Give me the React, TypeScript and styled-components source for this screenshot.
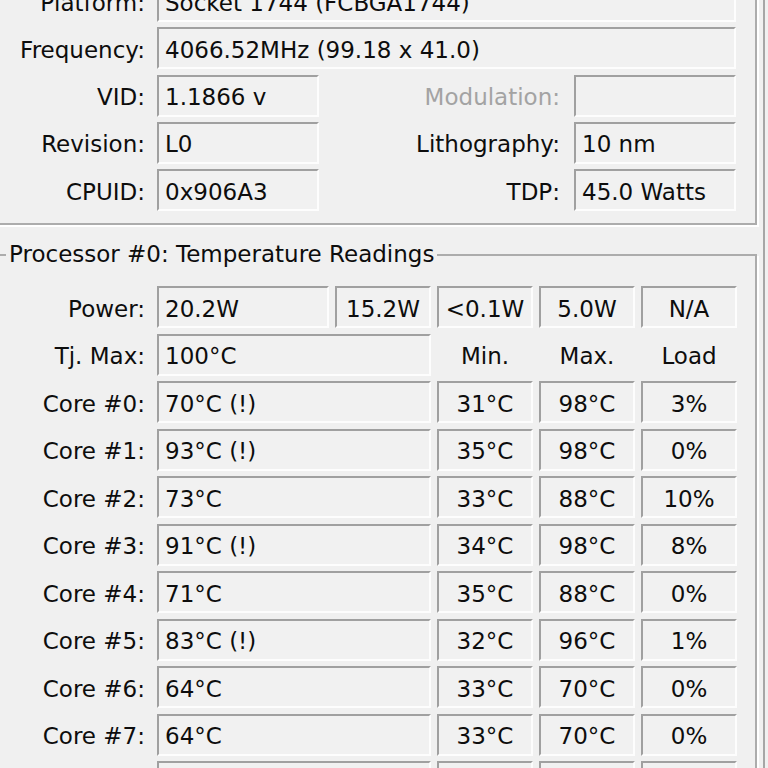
import React from 'react';
import styled, { createGlobalStyle } from 'styled-components';

const GlobalStyle = createGlobalStyle`
  html, body {
    margin: 0;
    padding: 0;
    background: #f0f0f0;
  }
  body {
    font-family: "DejaVu Sans", Verdana, sans-serif;
    font-size: 23px;
    color: #0d0d0d;
  }
`;

const Window = styled.div`
  width: 765px;
  height: 768px;
  overflow: hidden;
  background: #f0f0f0;
  border-right: 2px solid #a6a6a6;
  box-sizing: border-box;
`;

const TopGroup = styled.div`
  width: 760px;
  margin: -40px 0 0 -3px;
  padding: 18px 0 12px 1px;
  border: 2px solid #acacac;
  box-shadow: 2px 2px 0 #fff;
  box-sizing: border-box;
`;

const InfoGrid = styled.div`
  display: grid;
  grid-template-columns: 151px 162px 243px 162px;
  grid-auto-rows: 42px;
  column-gap: 6px;
  row-gap: 5.3px;
`;

const TempGroup = styled.fieldset`
  width: 760px;
  margin: 16px 0 0 -3px;
  padding: 18px 0 12px 1px;
  border: 2px solid #acacac;
  box-shadow: 2px 2px 0 #fff;
  box-sizing: border-box;
`;

const Legend = styled.legend`
  margin-left: 6px;
  padding: 0 3px;
  line-height: 27px;
  font-size: 23px;
  color: #0d0d0d;
`;

const TempGrid = styled.div`
  display: grid;
  grid-template-columns: 151px 172px 96px 96px 96px 96px;
  grid-auto-rows: 42px;
  column-gap: 6px;
  row-gap: 5.5px;
`;

const Label = styled.div<{ $dim?: boolean; $pad?: number }>`
  display: flex;
  align-items: center;
  justify-content: flex-end;
  padding: 3px ${p => p.$pad ?? 6}px 0 0;
  white-space: nowrap;
  color: ${p => (p.$dim ? '#a3a3a3' : '#0d0d0d')};
`;

const Field = styled.div<{ $span?: number; $center?: boolean }>`
  grid-column: span ${p => p.$span ?? 1};
  display: flex;
  align-items: center;
  justify-content: ${p => (p.$center ? 'center' : 'flex-start')};
  padding: 3px 0 0 ${p => (p.$center ? 0 : 6)}px;
  border: 2px solid;
  border-color: #a0a0a0 #fdfdfd #fdfdfd #a0a0a0;
  background: #f1f1f1;
  white-space: nowrap;
  overflow: hidden;
  box-sizing: border-box;
`;

const Header = styled.div`
  display: flex;
  align-items: center;
  justify-content: center;
  padding-top: 3px;
`;

const cores = [
  ['70°C (!)', '31°C', '98°C', '3%'],
  ['93°C (!)', '35°C', '98°C', '0%'],
  ['73°C', '33°C', '88°C', '10%'],
  ['91°C (!)', '34°C', '98°C', '8%'],
  ['71°C', '35°C', '88°C', '0%'],
  ['83°C (!)', '32°C', '96°C', '1%'],
  ['64°C', '33°C', '70°C', '0%'],
  ['64°C', '33°C', '70°C', '0%'],
  ['66°C', '33°C', '72°C', '0%'],
];

export default function App() {
  return (
    <>
      <GlobalStyle />
      <Window>
        <TopGroup>
          <InfoGrid>
            <Label>Platform:</Label>
            <Field $span={3}>Socket 1744 (FCBGA1744)</Field>

            <Label>Frequency:</Label>
            <Field $span={3}>4066.52MHz (99.18 x 41.0)</Field>

            <Label>VID:</Label>
            <Field>1.1866 v</Field>
            <Label $dim $pad={8}>Modulation:</Label>
            <Field />

            <Label>Revision:</Label>
            <Field>L0</Field>
            <Label $pad={8}>Lithography:</Label>
            <Field>10 nm</Field>

            <Label>CPUID:</Label>
            <Field>0x906A3</Field>
            <Label $pad={8}>TDP:</Label>
            <Field>45.0 Watts</Field>
          </InfoGrid>
        </TopGroup>

        <TempGroup>
          <Legend>Processor #0: Temperature Readings</Legend>
          <TempGrid>
            <Label>Power:</Label>
            <Field>20.2W</Field>
            <Field $center>15.2W</Field>
            <Field $center>&lt;0.1W</Field>
            <Field $center>5.0W</Field>
            <Field $center>N/A</Field>

            <Label>Tj. Max:</Label>
            <Field $span={2}>100°C</Field>
            <Header>Min.</Header>
            <Header>Max.</Header>
            <Header>Load</Header>

            {cores.map(([temp, min, max, load], i) => (
              <React.Fragment key={i}>
                <Label>Core #{i}:</Label>
                <Field $span={2}>{temp}</Field>
                <Field $center>{min}</Field>
                <Field $center>{max}</Field>
                <Field $center>{load}</Field>
              </React.Fragment>
            ))}
          </TempGrid>
        </TempGroup>
      </Window>
    </>
  );
}
